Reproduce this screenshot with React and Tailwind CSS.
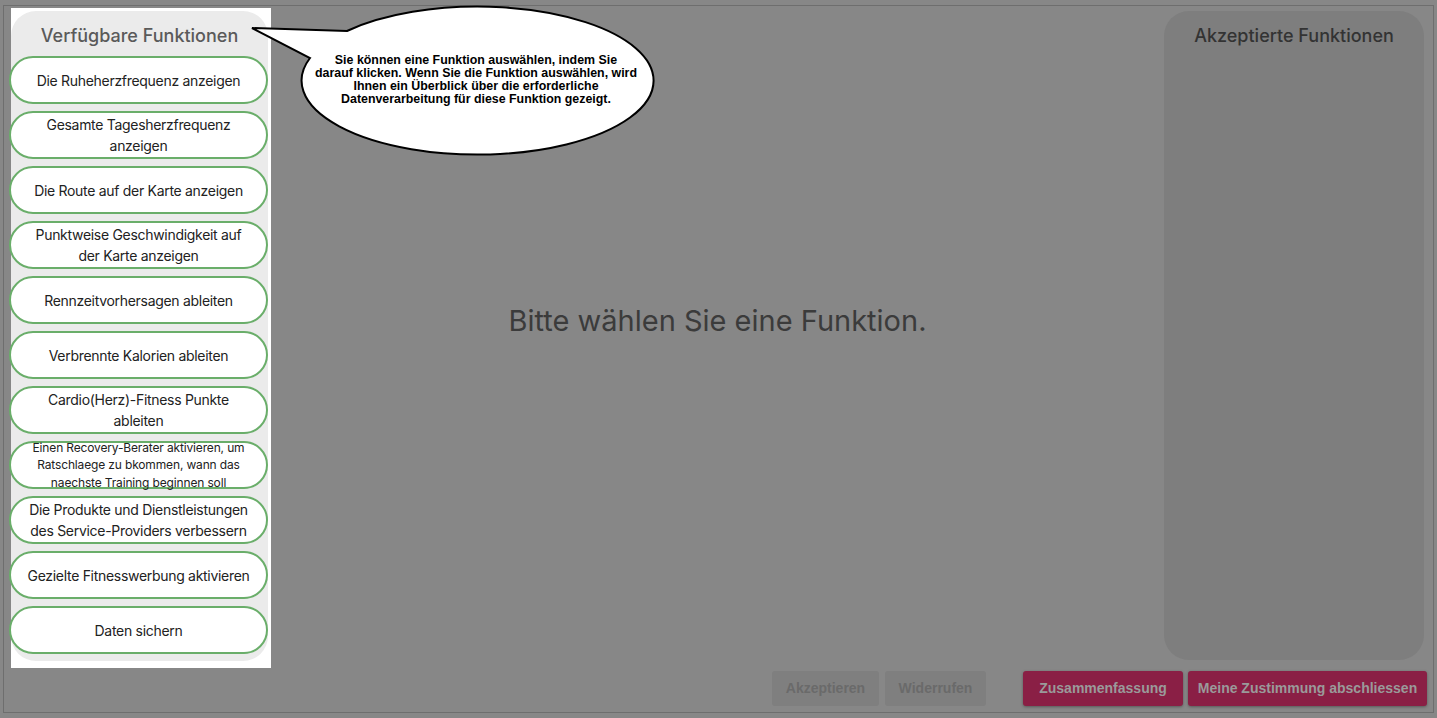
import React from 'react';

const FUNCTIONS = [
  { label: 'Die Ruheherzfrequenz anzeigen' },
  { label: 'Gesamte Tagesherzfrequenz anzeigen' },
  { label: 'Die Route auf der Karte anzeigen' },
  { label: 'Punktweise Geschwindigkeit auf der Karte anzeigen' },
  { label: 'Rennzeitvorhersagen ableiten' },
  { label: 'Verbrennte Kalorien ableiten' },
  { label: 'Cardio(Herz)-Fitness Punkte ableiten' },
  { label: 'Einen Recovery-Berater aktivieren, um Ratschlaege zu bkommen, wann das naechste Training beginnen soll', small: true },
  { label: 'Die Produkte und Dienstleistungen des Service-Providers verbessern' },
  { label: 'Gezielte Fitnesswerbung aktivieren' },
  { label: 'Daten sichern' },
];

function FunctionButton({ label, small }) {
  return (
    <button
      className={
        small
          ? 'w-[259px] h-[48px] rounded-[24px] border-2 border-[#6aae6a] bg-white text-[#222] flex items-center justify-center px-3 text-[12px] leading-[17.5px] tracking-[-0.15px] overflow-visible'
          : 'w-[259px] h-[48px] rounded-[24px] border-2 border-[#6aae6a] bg-white text-[#222] flex items-center justify-center px-[15px] text-[14px] leading-[21px] tracking-[-0.3px]'
      }
    >
      <span className="block">{label}</span>
    </button>
  );
}

function SpeechBubble() {
  return (
    <div className="absolute left-[240px] top-0 w-[430px] h-[165px]">
      <svg width="430" height="165" viewBox="240 0 430 165" className="absolute left-0 top-0">
        <path
          d="M252 28 L347 31 A176 74 0 1 1 310 58 Z"
          fill="#ffffff"
          stroke="#000000"
          strokeWidth="2"
          strokeLinejoin="miter"
        />
      </svg>
      <div
        className="absolute left-[46px] top-[54px] w-[380px] text-center text-[12.4px] leading-[13px] font-bold text-black"
        style={{ fontFamily: '"Liberation Sans", Arial, sans-serif' }}
      >
        Sie können eine Funktion auswählen, indem Sie
        <br />
        darauf klicken. Wenn Sie die Funktion auswählen, wird
        <br />
        Ihnen ein Überblick über die erforderliche
        <br />
        Datenverarbeitung für diese Funktion gezeigt.
      </div>
    </div>
  );
}

export default function App() {
  return (
    <div
      className="relative w-[1437px] h-[718px] bg-[#878787] pt-[5px] px-[3px] overflow-hidden"
      style={{ fontFamily: 'Inter, "Noto Sans", sans-serif' }}
    >
      <div className="w-[1431px] h-[708px] border border-[#6e6e6e] flex flex-col">

        {/* Main row */}
        <div className="flex h-[662px] items-start">

          {/* Available functions (highlighted) */}
          <div className="ml-[7px] mt-[2px] w-[260px] h-[660px] bg-white">
            <div className="mt-[3px] w-[257px] h-[650px] rounded-[25px] bg-[#ebebeb] flex flex-col">
              <div className="h-[45px] pt-[4px] flex items-center justify-center text-[18px] text-[#5a5a5a] font-medium">
                Verfügbare Funktionen
              </div>
              <div className="-ml-[2px] flex flex-col gap-[7px]">
                {FUNCTIONS.map((f, i) => (
                  <FunctionButton key={i} label={f.label} small={f.small} />
                ))}
              </div>
            </div>
          </div>

          {/* Center message */}
          <div className="flex-1 self-stretch pt-[297px] text-center text-[29px] leading-[36px] text-[#3b3b3b]">
            Bitte wählen Sie eine Funktion.
          </div>

          {/* Accepted functions */}
          <div className="mt-[5px] mr-[9px] w-[260px] h-[649px] rounded-[25px] bg-[#7e7e7e]">
            <div className="h-[45px] pt-[4px] flex items-center justify-center text-[18px] text-[#333] font-medium">
              Akzeptierte Funktionen
            </div>
          </div>
        </div>

        {/* Bottom buttons */}
        <div
          className="flex justify-end items-center mt-[3px] pr-[6px] text-[14px] font-bold"
          style={{ fontFamily: '"Liberation Sans", Arial, sans-serif' }}
        >
          <button className="w-[107px] h-[35px] rounded-[3px] bg-[#7f7f7f] text-[#6a6a6a]">Akzeptieren</button>
          <button className="ml-[6px] w-[101px] h-[35px] rounded-[3px] bg-[#7f7f7f] text-[#6a6a6a]">Widerrufen</button>
          <button className="ml-[37px] w-[160px] h-[35px] rounded-[3px] bg-[#8a1f45] text-[#9a9a9a] shadow-[0_1px_3px_rgba(0,0,0,0.35)]">Zusammenfassung</button>
          <button className="ml-[5px] w-[239px] h-[35px] rounded-[3px] bg-[#8a1f45] text-[#9a9a9a] shadow-[0_1px_3px_rgba(0,0,0,0.35)]">Meine Zustimmung abschliessen</button>
        </div>
      </div>

      <SpeechBubble />
    </div>
  );
}
